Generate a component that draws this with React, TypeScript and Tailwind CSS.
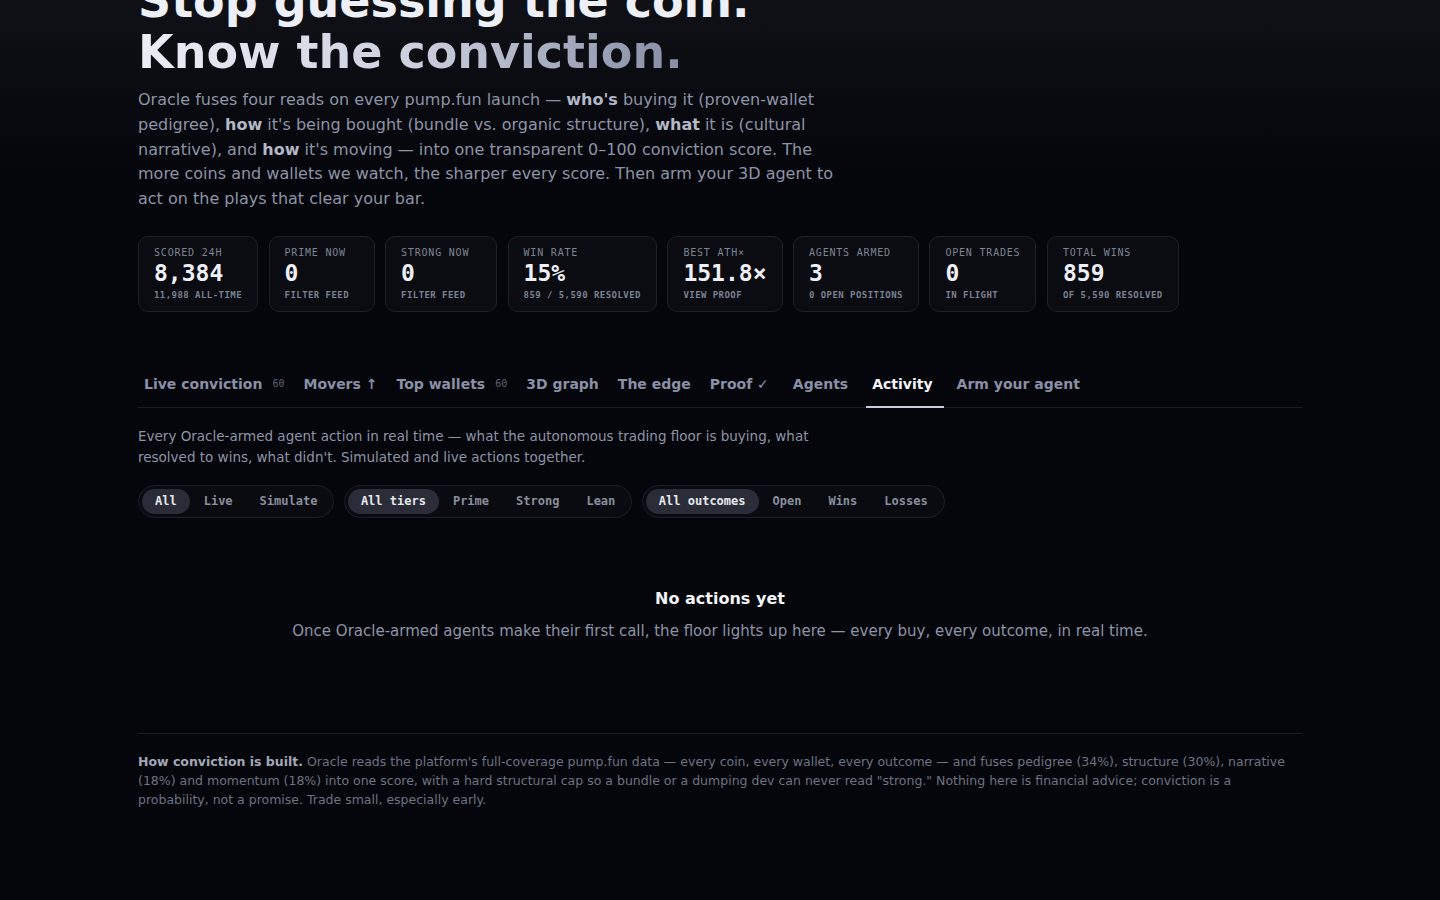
import { useState } from "react";

const sans = "font-['DejaVu_Sans',sans-serif]";
const mono = "font-['DejaVu_Sans_Mono',monospace]";

type Stat = { label: string; value: string; sub: string; w?: string };

const stats: Stat[] = [
  { label: "Scored 24h", value: "8,384", sub: "11,988 all-time" },
  { label: "Prime now", value: "0", sub: "Filter feed", w: "min-w-[106px]" },
  { label: "Strong now", value: "0", sub: "Filter feed", w: "min-w-[112px]" },
  { label: "Win rate", value: "15%", sub: "859 / 5,590 resolved" },
  { label: "Best ATH×", value: "151.8×", sub: "View proof" },
  { label: "Agents armed", value: "3", sub: "0 open positions" },
  { label: "Open trades", value: "0", sub: "In flight" },
  { label: "Total wins", value: "859", sub: "of 5,590 resolved" },
];

const tabs: { name: string; count?: string; wide?: boolean }[] = [
  { name: "Live conviction", count: "60" },
  { name: "Movers ↑" },
  { name: "Top wallets", count: "60" },
  { name: "3D graph" },
  { name: "The edge" },
  { name: "Proof ✓", wide: true },
  { name: "Agents", wide: true },
  { name: "Activity", wide: true },
  { name: "Arm your agent" },
];

function Segmented({ options }: { options: string[] }) {
  const [active, setActive] = useState(options[0]);
  return (
    <div className="flex items-center gap-[1px] rounded-full border border-[#1c1f29] bg-[#090b11] p-[3px]">
      {options.map((o) => (
        <button
          key={o}
          onClick={() => setActive(o)}
          className={`${mono} rounded-full px-[13px] py-[5px] text-[12px] font-bold leading-[15px] ${
            active === o ? "bg-[#2a2d37] text-[#e6e8ee]" : "text-[#8a8f9e]"
          }`}
        >
          {o}
        </button>
      ))}
    </div>
  );
}

export default function App() {
  const [tab, setTab] = useState("Activity");

  return (
    <main
      className={`${sans} min-h-screen overflow-hidden bg-[#05060b] bg-[linear-gradient(180deg,#101117_0px,#05060b_170px)] text-[#e5e7eb]`}
    >
      <div className="mx-auto max-w-[1164px] pb-[90px]">
        {/* Hero */}
        <section className="-mt-[24px]">
          <h1 className="text-[46px] font-bold leading-[1.1] text-[#eef0f7]">
            Stop guessing the coin.
            <br />
            <span className="bg-gradient-to-r from-[#eceef6] via-[#cdd1de] to-[#868ca4] bg-clip-text text-transparent">
              Know the conviction.
            </span>
          </h1>
          <p className="mt-[11px] max-w-[700px] text-[16px] leading-[24.75px] text-[#8e94a6]">
            Oracle fuses four reads on every pump.fun launch —{" "}
            <b className="text-[#b4b9c8]">who's</b> buying it (proven-wallet pedigree),{" "}
            <b className="text-[#b4b9c8]">how</b> it's being bought (bundle vs. organic structure),{" "}
            <b className="text-[#b4b9c8]">what</b> it is (cultural narrative), and{" "}
            <b className="text-[#b4b9c8]">how</b> it's moving — into one transparent 0–100 conviction
            score. The more coins and wallets we watch, the sharper every score. Then arm your 3D
            agent to act on the plays that clear your bar.
          </p>
        </section>

        {/* Stat strip */}
        <div className="mt-[24px] flex gap-[10.5px]">
          {stats.map((s) => (
            <div
              key={s.label}
              className={`${mono} ${s.w ?? ""} rounded-[10px] border border-[#1d2029] bg-[#0a0c12] px-[15px] pb-[10px] pt-[10px]`}
            >
              <div className="text-[10px] uppercase leading-[12px] tracking-[0.08em] text-[#7f8493]">
                {s.label}
              </div>
              <div className="mt-[1px] text-[23px] font-bold leading-[26px] text-[#eef0f5]">
                {s.value}
              </div>
              <div className="mt-[3px] text-[9px] font-bold uppercase leading-[12px] tracking-[0.05em] text-[#7c8190]">
                {s.sub}
              </div>
            </div>
          ))}
        </div>

        {/* Tabs */}
        <nav className="mt-[52px] flex gap-[7px] border-b border-[#1b1d26]">
          {tabs.map((t) => {
            const on = tab === t.name;
            return (
              <button
                key={t.name}
                onClick={() => setTab(t.name)}
                className={`-mb-px flex items-center border-b-2 pb-[13px] pl-[6px] pt-[11px] text-[14px] font-bold leading-[18px] ${
                  t.wide ? "pr-[11px]" : "pr-[6px]"
                } ${on ? "border-[#c9cde0] text-[#f3f4f8]" : "border-transparent text-[#8a90a6]"}`}
              >
                {t.name}
                {t.count && (
                  <span className={`${mono} ml-[10px] text-[10px] font-normal text-[#5d6272]`}>
                    {t.count}
                  </span>
                )}
              </button>
            );
          })}
        </nav>

        {/* Activity panel */}
        <p className="mt-[18px] max-w-[700px] text-[13.5px] leading-[21px] text-[#8e94a6]">
          Every Oracle-armed agent action in real time — what the autonomous trading floor is
          buying, what resolved to wins, what didn't. Simulated and live actions together.
        </p>

        <div className="mt-[17px] flex gap-[9.5px]">
          <Segmented options={["All", "Live", "Simulate"]} />
          <Segmented options={["All tiers", "Prime", "Strong", "Lean"]} />
          <Segmented options={["All outcomes", "Open", "Wins", "Losses"]} />
        </div>

        <div className="flex flex-col items-center pb-[91px] pt-[71px] text-center">
          <div className="text-[16px] font-bold leading-[20px] text-[#f3f4f8]">No actions yet</div>
          <div className="mt-[11px] text-[15px] leading-[22px] text-[#8e94a6]">
            Once Oracle-armed agents make their first call, the floor lights up here — every buy,
            every outcome, in real time.
          </div>
        </div>

        {/* Methodology note */}
        <footer className="border-t border-[#1b1d26] pt-[18px] text-[12.5px] leading-[19px] text-[#6e7383]">
          <b className="text-[#a3a8b7]">How conviction is built.</b> Oracle reads the platform's
          full-coverage pump.fun data — every coin, every wallet, every outcome — and fuses pedigree
          (34%), structure (30%), narrative (18%) and momentum (18%) into one score, with a hard
          structural cap so a bundle or a dumping dev can never read "strong." Nothing here is
          financial advice; conviction is a probability, not a promise. Trade small, especially
          early.
        </footer>
      </div>
    </main>
  );
}
